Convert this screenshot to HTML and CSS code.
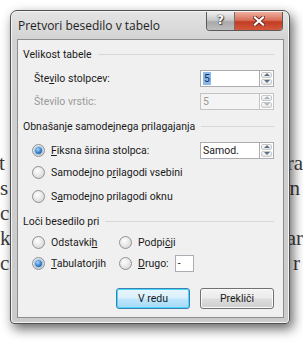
FILE: index.html
```html
<!DOCTYPE html>
<html lang="sl">
<head>
<meta charset="utf-8">
<title>Pretvori besedilo v tabelo</title>
<link rel="stylesheet" href="styles.css">
</head>
<body>
<div class="doc">
  <div class="docline"><span class="lt">t</span><span class="rt">ra</span></div>
  <div class="docline"><span>s</span><span class="rt pad">n</span></div>
  <div class="docline"><span>c</span><span></span></div>
  <div class="docline"><span>k</span><span class="rt">ar</span></div>
  <div class="docline"><span>c</span><span class="rt pad">r</span></div>
</div>

<div class="window">
  <div class="titlebar">
    <span class="title">Pretvori besedilo v tabelo</span>
    <div class="capbtns">
      <div class="capbtn help"><span>?</span></div>
      <div class="capbtn close">
        <svg width="12" height="10" viewBox="0 0 12 10">
          <path d="M2 1.5 L10 8.5 M10 1.5 L2 8.5" stroke="#6a2a20" stroke-width="4" stroke-linecap="square" fill="none"/>
          <path d="M2 1.5 L10 8.5 M10 1.5 L2 8.5" stroke="#ffffff" stroke-width="2.2" stroke-linecap="square" fill="none"/>
        </svg>
      </div>
    </div>
  </div>
  <div class="client">
    <div class="heading"><span>Velikost tabele</span><i class="rule"></i></div>
    <div class="row field">
      <span class="lbl">Šte<u>v</u>ilo stolpcev:</span>
      <div class="spin">
        <div class="box"><span class="sel">5</span></div>
        <div class="arrows"><b class="up"></b><b class="dn"></b></div>
      </div>
    </div>
    <div class="row field dis">
      <span class="lbl">Število vrstic:</span>
      <div class="spin">
        <div class="box">5</div>
        <div class="arrows"><b class="up"></b><b class="dn"></b></div>
      </div>
    </div>

    <div class="heading"><span>Obnašanje samodejnega prilagajanja</span><i class="rule"></i></div>
    <div class="row radio-row">
      <div class="opt"><i class="radio on"></i><span><u>F</u>iksna širina stolpca:</span></div>
      <div class="spin">
        <div class="box">Samod.</div>
        <div class="arrows"><b class="up"></b><b class="dn"></b></div>
      </div>
    </div>
    <div class="row radio-row">
      <div class="opt"><i class="radio"></i><span>Samodejno p<u>r</u>ilagodi vsebini</span></div>
    </div>
    <div class="row radio-row r3">
      <div class="opt"><i class="radio"></i><span>S<u>a</u>modejno prilagodi oknu</span></div>
    </div>

    <div class="heading"><span>Loči besedilo pri</span><i class="rule"></i></div>
    <div class="row sep-row ra">
      <div class="opt c1"><i class="radio"></i><span>Odstavki<u>h</u></span></div>
      <div class="opt"><i class="radio"></i><span>Podpi<u>č</u>ji</span></div>
    </div>
    <div class="row sep-row">
      <div class="opt c1"><i class="radio on"></i><span><u>T</u>abulatorjih</span></div>
      <div class="opt"><i class="radio"></i><span><u>D</u>rugo:</span></div>
      <div class="small">-</div>
    </div>

    <div class="buttons">
      <div class="btn default">V redu</div>
      <div class="btn">Prekliči</div>
    </div>
  </div>
</div>
</body>
</html>
```

FILE: styles.css
```css
html, body {
  margin: 0;
  padding: 0;
  background: #ffffff;
}
body {
  width: 303px;
  height: 343px;
  overflow: hidden;
  position: relative;
  font-family: "Open Sans", "Noto Sans", sans-serif;
}

.doc {
  padding-top: 151px;
  font-family: "Liberation Serif", "Times New Roman", serif;
  font-size: 21px;
  line-height: 25px;
  color: #3c3c3c;
}
.docline {
  height: 25px;
  display: flex;
  justify-content: space-between;
}
.lt { margin-left: -1px; }
.rt.pad { margin-right: 3px; }

.window {
  position: absolute;
  left: 10px;
  top: 10px;
  width: 278px;
  height: 312px;
  border: 1px solid #4f4f4f;
  border-radius: 7px 7px 4px 4px;
  background: linear-gradient(#e4e4e4, #d2d2d2 30px, #cbcbcb);
  box-shadow: 3px 5px 12px rgba(0, 0, 0, 0.6), inset 0 0 0 1px #f4f4f4;
  display: flex;
  flex-direction: column;
}

.titlebar {
  height: 28px;
  display: flex;
  align-items: flex-start;
  justify-content: space-between;
  padding-left: 7px;
}
.title {
  margin-top: 6px;
  font-size: 12px;
  color: #1e1e1e;
}
.capbtns {
  display: flex;
  margin-right: 6px;
  border: 1px solid #5a5a5a;
  border-top: none;
  border-radius: 0 0 4px 4px;
  overflow: hidden;
  height: 18px;
  margin-top: 1px;
}
.capbtn {
  height: 18px;
  display: flex;
  align-items: center;
  justify-content: center;
  color: #ffffff;
  font-family: "DejaVu Sans", sans-serif;
  font-weight: bold;
  text-shadow: 0 0 1px #333, 0 0 1px #333, 1px 1px 1px #444;
}
.capbtn.help {
  width: 27px;
  border-right: 1px solid #6e6e6e;
  background: linear-gradient(#eeeeee, #c9c9c9 45%, #a9a9a9 55%, #bdbdbd);
  font-size: 12px;
}
.capbtn.help span {
  margin-top: -2px;
}
.capbtn.close {
  width: 47px;
  background: linear-gradient(#efb0a0, #d8705a 45%, #c23b23 55%, #d5583c);
}
.capbtn.close svg {
  margin-top: -1px;
}

.client {
  flex: 1;
  margin: 0 5px 5px 6px;
  border: 1px solid #8d8d8d;
  background: #f0f0f0;
  padding: 0 9px 0 5px;
  display: flex;
  flex-direction: column;
  font-family: "Roboto", "Open Sans", sans-serif;
  font-size: 10.5px;
  color: #1a1a1a;
}

.heading {
  height: 16px;
  margin-top: 6px;
  display: flex;
  align-items: center;
}
.heading .rule {
  flex: 1;
  height: 1px;
  background: #d8d8d8;
  margin-left: 6px;
}

.row {
  height: 22px;
  display: flex;
  align-items: center;
}
.field {
  padding-left: 11px;
  margin-top: 1px;
}
.heading + .field { margin-top: 5px; }
.lbl { flex: 1; }
.dis .lbl { color: #9a9a9a; }

.spin {
  display: flex;
  height: 17px;
}
.radio-row .spin { margin-left: auto; }
.box {
  width: 56px;
  height: 15px;
  border: 1px solid #abadb3;
  border-right: none;
  background: #ffffff;
  display: flex;
  align-items: center;
  padding-left: 2px;
}
.sel {
  background: #8bb9e6;
  color: #14306a;
  padding: 0 1px;
  line-height: 13px;
}
.dis .box {
  background: #f4f4f4;
  border-color: #c4c4c4;
  color: #9a9a9a;
}
.arrows {
  width: 15px;
  height: 17px;
  display: flex;
  flex-direction: column;
  border: 1px solid #abadb3;
  box-sizing: border-box;
  background: #ffffff;
}
.dis .arrows { border-color: #c4c4c4; }
.arrows b {
  flex: 1;
  margin: 1px;
  border: 1px solid #c8c8c8;
  border-radius: 2px;
  background: linear-gradient(#fbfbfb, #e6e6e6);
  position: relative;
}
.arrows b.dn { margin-top: 0; }
.arrows b::after {
  content: "";
  position: absolute;
  left: 50%;
  top: 50%;
  margin-left: -3px;
  margin-top: -1.5px;
  border-left: 3px solid transparent;
  border-right: 3px solid transparent;
}
.arrows b.up::after { border-bottom: 3px solid #5a6e8c; }
.arrows b.dn::after { border-top: 3px solid #5a6e8c; }
.dis .arrows b::after { opacity: 0.45; }

.radio-row {
  padding-left: 9px;
}
.radio-row.r3 { margin-top: 2px; }
.heading + .radio-row { margin-top: 5px; }
.opt {
  display: flex;
  align-items: center;
}
.radio {
  width: 11px;
  height: 11px;
  border: 1px solid #8f9090;
  border-radius: 50%;
  background: radial-gradient(circle at 40% 35%, #ffffff, #e2e2e2 60%, #cfcfcf);
  margin-right: 6px;
  box-sizing: content-box;
  position: relative;
}
.radio.on::after {
  content: "";
  position: absolute;
  left: 2px;
  top: 2px;
  width: 7px;
  height: 7px;
  border-radius: 50%;
  background: radial-gradient(circle at 40% 35%, #a6d6ff, #2f74c0 60%, #1d4f8a);
  box-shadow: 0 0 1px 1px rgba(80, 150, 220, 0.5);
}

.sep-row {
  padding-left: 9px;
  height: 21px;
}
.sep-row.ra { margin-top: 3px; }
.c1 { width: 87px; }
.small {
  width: 15px;
  height: 15px;
  border: 1px solid #abadb3;
  background: #ffffff;
  margin-left: 6px;
  display: flex;
  align-items: center;
  padding-left: 2px;
  box-sizing: content-box;
}

.buttons {
  display: flex;
  justify-content: flex-end;
  gap: 10px;
  margin-top: 14px;
}
.btn {
  width: 72px;
  height: 19px;
  border: 1px solid #707070;
  border-radius: 3px;
  background: linear-gradient(#f4f4f4, #ebebeb 48%, #dddddd 52%, #cfcfcf);
  box-shadow: inset 0 0 0 1px #fafafa;
  display: flex;
  align-items: center;
  justify-content: center;
  color: #1a1a1a;
}
.btn.default {
  border-color: #3c7fb1;
  box-shadow: inset 0 0 0 1px #48d8fb;
  background: linear-gradient(#eaf6fd, #d9f0fc 48%, #bee6fd 52%, #a7d9f5);
}
```
